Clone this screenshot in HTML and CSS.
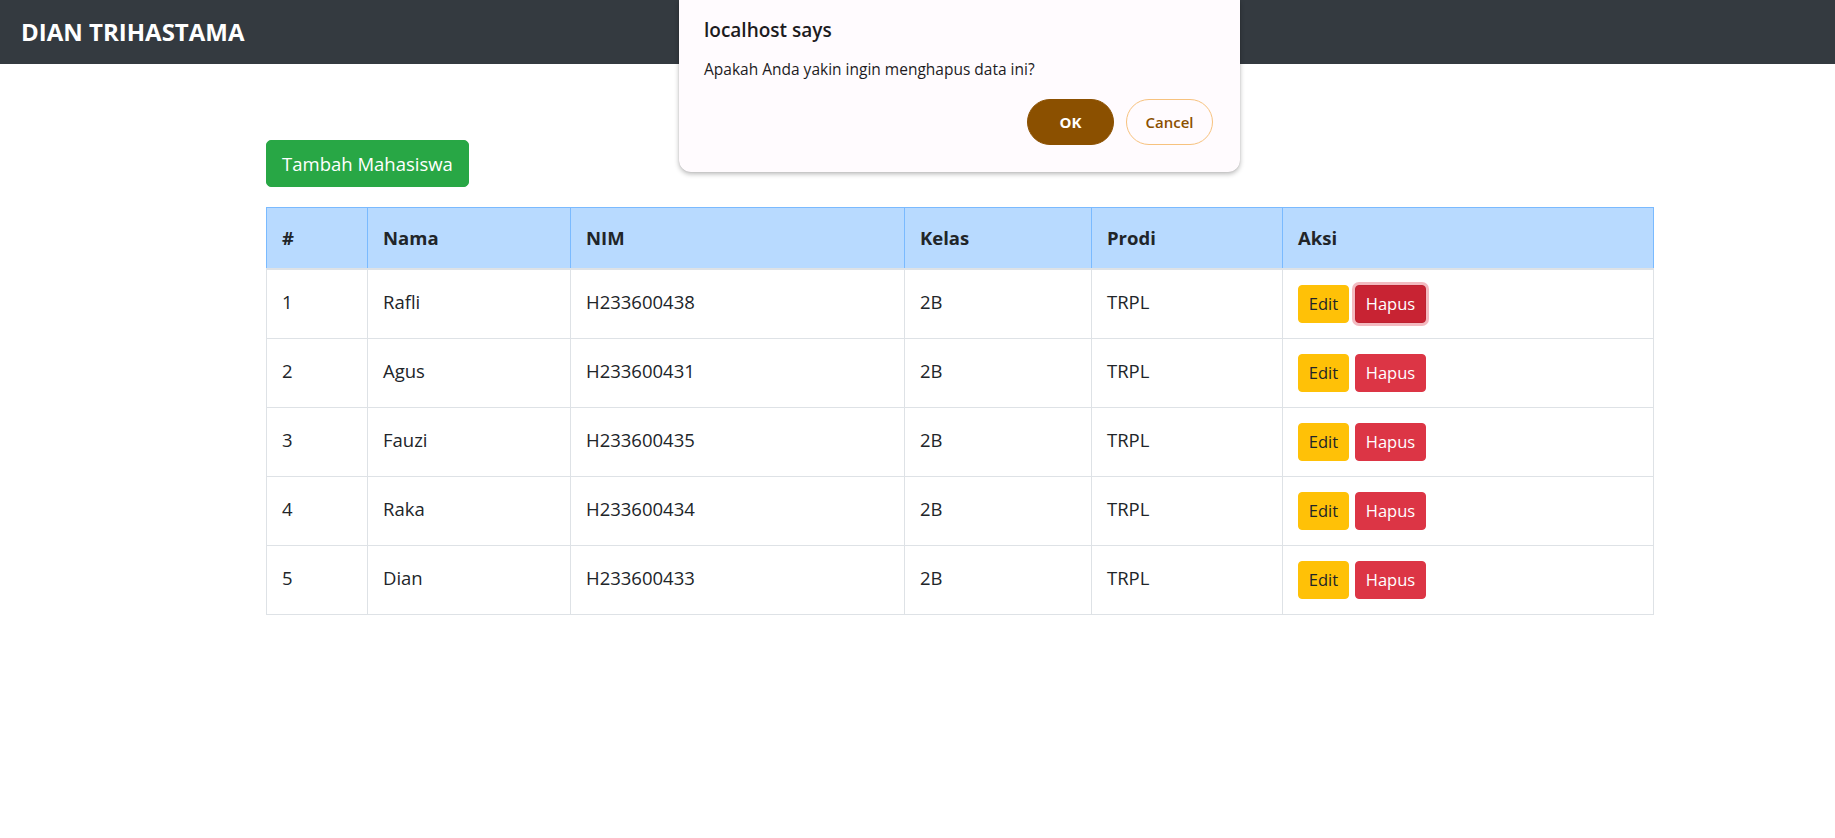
FILE: index.html
```html
<!DOCTYPE html>
<html lang="id">
<head>
<meta charset="utf-8">
<title>Data Mahasiswa</title>
<link rel="stylesheet" href="styles.css">
</head>
<body>
<nav class="navbar"><span class="brand">DIAN TRIHASTAMA</span></nav>
<main class="container">
  <button class="btn btn-success">Tambah Mahasiswa</button>
  <table class="table">
    <colgroup>
      <col class="w1"><col class="w2"><col class="w3"><col class="w4"><col class="w5"><col class="w6">
    </colgroup>
    <thead>
      <tr><th>#</th><th>Nama</th><th>NIM</th><th>Kelas</th><th>Prodi</th><th>Aksi</th></tr>
    </thead>
    <tbody>
      <tr><td>1</td><td>Rafli</td><td>H233600438</td><td>2B</td><td>TRPL</td><td class="act"><span class="actions"><button class="btn-sm btn-warning">Edit</button><button class="btn-sm btn-danger focused">Hapus</button></span></td></tr>
      <tr><td>2</td><td>Agus</td><td>H233600431</td><td>2B</td><td>TRPL</td><td class="act"><span class="actions"><button class="btn-sm btn-warning">Edit</button><button class="btn-sm btn-danger">Hapus</button></span></td></tr>
      <tr><td>3</td><td>Fauzi</td><td>H233600435</td><td>2B</td><td>TRPL</td><td class="act"><span class="actions"><button class="btn-sm btn-warning">Edit</button><button class="btn-sm btn-danger">Hapus</button></span></td></tr>
      <tr><td>4</td><td>Raka</td><td>H233600434</td><td>2B</td><td>TRPL</td><td class="act"><span class="actions"><button class="btn-sm btn-warning">Edit</button><button class="btn-sm btn-danger">Hapus</button></span></td></tr>
      <tr><td>5</td><td>Dian</td><td>H233600433</td><td>2B</td><td>TRPL</td><td class="act"><span class="actions"><button class="btn-sm btn-warning">Edit</button><button class="btn-sm btn-danger">Hapus</button></span></td></tr>
    </tbody>
  </table>
</main>
<div class="dialog">
  <div class="dialog-title">localhost says</div>
  <div class="dialog-msg">Apakah Anda yakin ingin menghapus data ini?</div>
  <div class="dialog-actions">
    <button class="dbtn dbtn-ok">OK</button>
    <button class="dbtn dbtn-cancel">Cancel</button>
  </div>
</div>
</body>
</html>
```
FILE: styles.css
```css
* { box-sizing: border-box; }
html, body { margin: 0; padding: 0; }
body {
  font-family: "Open Sans", "Noto Sans", sans-serif;
  font-size: 18.5px;
  line-height: 30px;
  color: #212529;
  background: #fff;
}
.navbar {
  height: 64px;
  background: #343a40;
  display: flex;
  align-items: center;
  padding-left: 21px;
}
.brand {
  color: #fff;
  font-weight: 700;
  font-size: 24px;
  line-height: 30px;
}
.container {
  width: 1387px;
  margin-left: 266px;
  padding-top: 76px;
  display: flex;
  flex-direction: column;
  align-items: flex-start;
  gap: 20px;
}
button { font-family: inherit; cursor: pointer; }
.btn {
  border: 1px solid transparent;
  border-radius: 5px;
  font-size: 18.5px;
  line-height: 30px;
  padding: 7.5px 15px;
  width: 203px;
  height: 47px;
}
.btn-success { background: #28a745; border-color: #28a745; color: #fff; }
.table {
  width: 1387px;
  border-collapse: collapse;
  table-layout: fixed;
}
.w1 { width: 101px; }
.w2 { width: 203px; }
.w3 { width: 334px; }
.w4 { width: 187px; }
.w5 { width: 191px; }
.w6 { width: 371px; }
.table th {
  background: #b8daff;
  border: 1px solid #7abaff;
  border-bottom: 2px solid #dee2e6;
  text-align: left;
  font-weight: 700;
  padding: 15px;
  vertical-align: bottom;
}
.table td {
  border: 1px solid #dee2e6;
  padding: 17px 15px 13px;
  vertical-align: top;
}
.table td.act { padding: 15px; }
.actions { display: flex; gap: 6px; }
.btn-sm {
  border: 1px solid transparent;
  border-radius: 4px;
  font-size: 16.5px;
  line-height: 26px;
  height: 38px;
  padding: 5px 10px;
}
.btn-warning { background: #ffc107; border-color: #ffc107; color: #212529; width: 51px; padding: 5px 0; }
.btn-danger { background: #dc3545; border-color: #dc3545; color: #fff; width: 71px; padding: 5px 0; }
.btn-danger.focused {
  background: #c82333;
  border-color: #bd2130;
  box-shadow: 0 0 0 3px rgba(225, 83, 97, 0.4);
}
.dialog {
  position: absolute;
  top: 0;
  left: 679px;
  width: 561px;
  height: 172px;
  background: #fffbfe;
  border-radius: 0 0 12px 12px;
  box-shadow: 0 2px 5px rgba(0, 0, 0, 0.28), 0 0 1px rgba(0, 0, 0, 0.2);
  padding: 17px 27px 0 25px;
  display: flex;
  flex-direction: column;
}
.dialog-title {
  font-size: 19px;
  font-weight: 600;
  line-height: 26px;
  color: #1d1b1e;
}
.dialog-msg {
  margin-top: 15px;
  font-size: 15.5px;
  line-height: 22px;
  color: #1d1b1e;
}
.dialog-actions {
  margin-top: 19px;
  display: flex;
  justify-content: flex-end;
  gap: 12px;
}
.dbtn {
  width: 87px;
  height: 46px;
  border-radius: 23px;
  font-size: 15px;
  font-weight: 600;
}
.dbtn-ok { background: #8b5000; border: 1px solid #8b5000; color: #fff; font-weight: 700; }
.dbtn-cancel { background: #fffbfe; border: 1px solid #f7c27e; color: #8b5000; }
```
